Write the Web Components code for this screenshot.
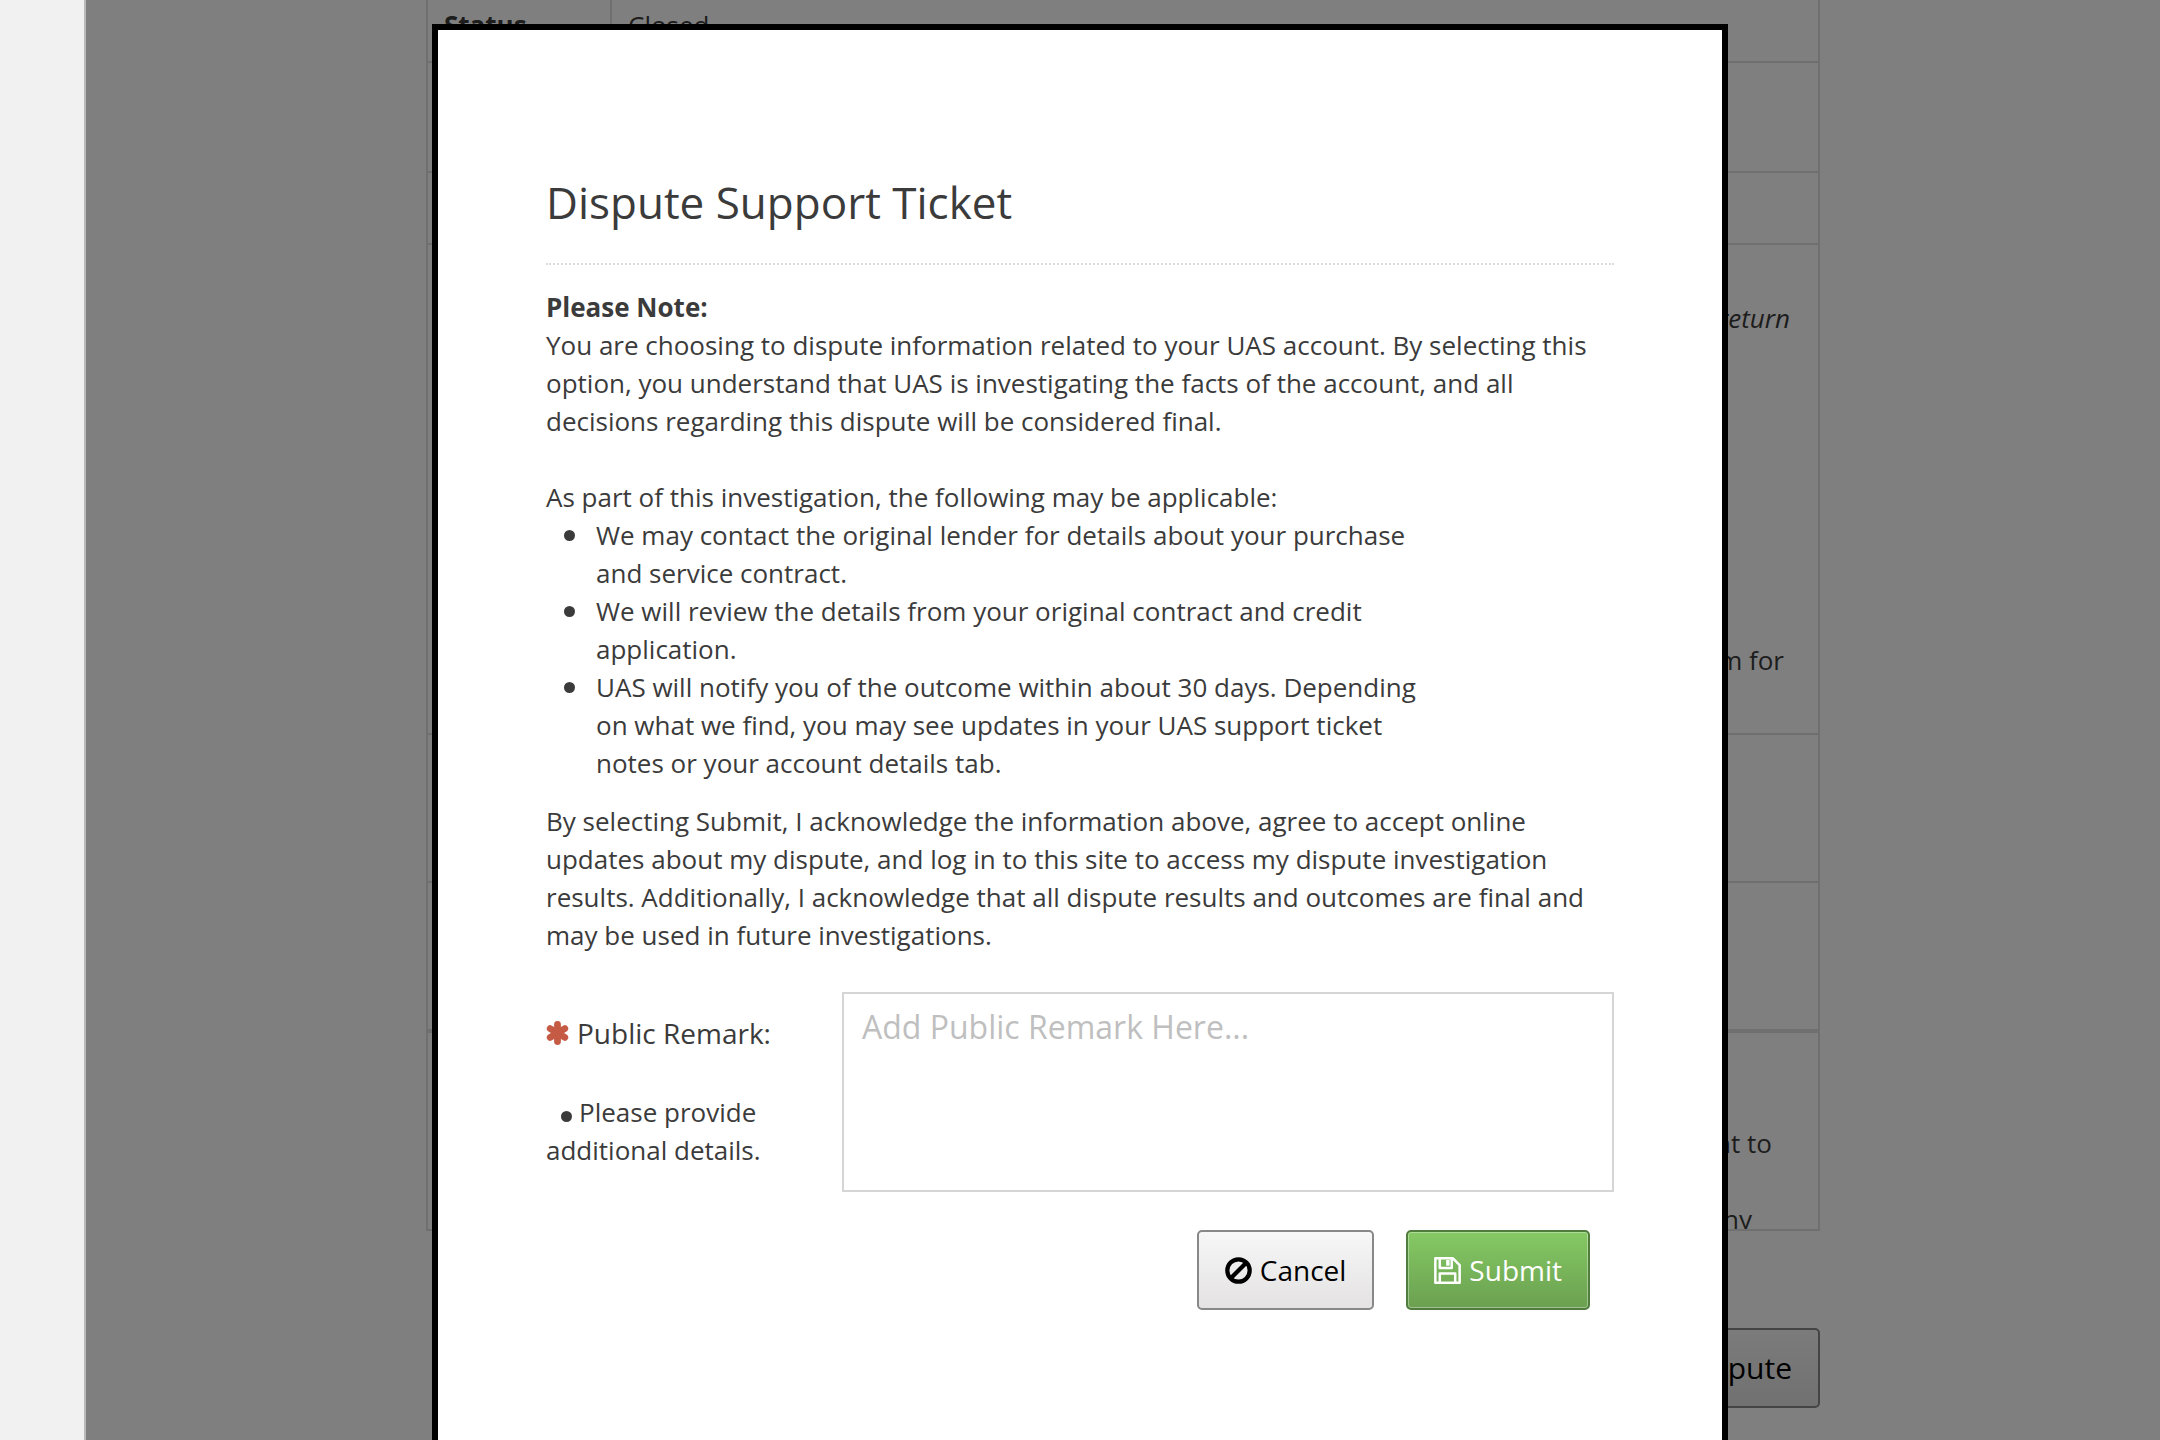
<!DOCTYPE html>
<html lang="en">
<head>
<meta charset="utf-8">
<title>Dispute Support Ticket</title>
<style>
  html, body { height: 100%; }
  body { margin: 0; overflow: hidden; background: #fff; color: #3b3b3b; font: 26px/38px "Open Sans", "Noto Sans", sans-serif; }
</style>
</head>
<body>
<app-shell>
  <ticket-details></ticket-details>
  <support-dialog slot="dialog" heading="Dispute Support Ticket">
    <dispute-notice></dispute-notice>
    <remark-form></remark-form>
  </support-dialog>
</app-shell>

<script>
class BaseElement extends HTMLElement {
  connectedCallback() {
    if (!this.shadowRoot) this.attachShadow({ mode: 'open' }).innerHTML = this.view();
  }
}

customElements.define('app-shell', class extends BaseElement {
  view() { return `
    <style>
      :host { display: flex; height: 100vh; overflow: hidden; }
      aside { box-sizing: border-box; flex: none; width: 86px; background: #f1f1f1; border-right: 2px solid #bababa; }
      main { position: relative; flex: 1; min-width: 0; padding: 0 340px; overflow: hidden; }
      .backdrop { position: absolute; inset: 0; background: rgba(0, 0, 0, .5); }
    </style>
    <aside></aside>
    <main><slot></slot><div class="backdrop"></div></main>
    <slot name="dialog"></slot>`; }
});

customElements.define('ticket-details', class extends BaseElement {
  view() { return `
    <style>
      :host { display: block; }
      table { width: 100%; border-collapse: collapse; border-top: 0; table-layout: fixed; }
      th, td { box-sizing: border-box; border: 2px solid #dfdfdf; padding: 6px 16px; vertical-align: top; text-align: left; }
      tr:first-child > * { border-top: 0; }
      th { width: 184px; font-weight: 700; }
      p { margin: 0; text-align: right; }
      .italic { font-style: italic; padding: 48px 12px 0 0; }
      .form { padding: 304px 18px 0 0; }
      .notes { box-sizing: border-box; height: 200px; border: 2px solid #dfdfdf; padding: 91px 46px 0 0; overflow: hidden; }
      .notes p + p { padding: 38px 20px 0 0; }
      .actions { display: flex; justify-content: flex-end; padding-top: 97px; }
      .actions ui-button { --button-size: 30px; }
    </style>
    <table>
      <tr style="height:62px"><th scope="row">Status</th><td>Closed</td></tr>
      <tr style="height:110px"><th></th><td></td></tr>
      <tr style="height:72px"><th></th><td></td></tr>
      <tr style="height:490px"><th></th><td><p class="italic">return</p><p class="form">form for</p></td></tr>
      <tr style="height:148px"><th></th><td></td></tr>
      <tr style="height:148px"><th></th><td></td></tr>
    </table>
    <div class="notes"><p>want to</p><p>any</p></div>
    <div class="actions"><ui-button>Dispute</ui-button></div>`; }
});

customElements.define('ui-button', class extends BaseElement {
  view() { return `
    <style>
      :host { display: block; }
      button { display: flex; align-items: center; gap: 8px; box-sizing: border-box; height: 80px; margin: 0; padding: 0 26px;
        border: 2px solid #888; border-radius: 5px; background: linear-gradient(#f7f7f7, #e4e2e3); color: #000;
        font-family: "Open Sans", "Noto Sans", sans-serif; font-size: var(--button-size, 28px); line-height: 40px; }
      :host([variant="primary"]) button { color: #fff; border-color: #507d3d; background: linear-gradient(#85c964, #6ba050);
        box-shadow: inset 0 0 0 1px rgba(255, 255, 255, .35); }
      ::slotted(svg) { display: block; width: 27px; height: 27px; }
    </style>
    <button type="button"><slot name="icon"></slot><span><slot></slot></span></button>`; }
});

customElements.define('support-dialog', class extends BaseElement {
  view() { return `
    <style>
      :host { position: fixed; inset: 0; display: grid; padding: 24px 20% 0; overflow: hidden; }
      section { box-sizing: border-box; border: 6px solid #000; border-bottom: 0; background: #fff; padding: 142px 108px 0; }
      h1 { margin: 0 0 23px; padding-bottom: 31px; border-bottom: 2px dotted #dcdcdc; font-size: 44px; line-height: 60px; font-weight: 400; }
    </style>
    <section role="dialog" aria-labelledby="title">
      <h1 id="title">${this.getAttribute('heading')}</h1>
      <slot></slot>
    </section>`; }
});

customElements.define('dispute-notice', class extends BaseElement {
  view() { return `
    <style>
      :host { display: block; }
      p { margin: 0; }
      .gap { margin-top: 38px; }
      ul { margin: 0 180px 20px 0; padding: 0; list-style: none; }
      li { display: grid; grid-template-columns: 50px 1fr; }
      li::before { content: ""; width: 11px; height: 11px; margin: 14px 0 0 18px; border-radius: 50%; background: #3b3b3b; }
    </style>
    <p><strong>Please Note:</strong></p>
    <p>You are choosing to dispute information related to your UAS account. By selecting this option, you understand that UAS is investigating the facts of the account, and all decisions regarding this dispute will be considered final.</p>
    <p class="gap">As part of this investigation, the following may be applicable:</p>
    <ul>
      <li>We may contact the original lender for details about your purchase and service contract.</li>
      <li>We will review the details from your original contract and credit application.</li>
      <li>UAS will notify you of the outcome within about 30 days. Depending on what we find, you may see updates in your UAS support ticket notes or your account details tab.</li>
    </ul>
    <p>By selecting Submit, I acknowledge the information above, agree to accept online updates about my dispute, and log in to this site to access my dispute investigation results. Additionally, I acknowledge that all dispute results and outcomes are final and may be used in future investigations.</p>`; }
});

customElements.define('remark-form', class extends BaseElement {
  view() { return `
    <style>
      :host { display: block; margin-top: 38px; }
      .field { display: grid; grid-template-columns: 296px 1fr; }
      .caption { padding: 21px 60px 0 0; }
      label { display: flex; align-items: center; gap: 8px; font-size: 28px; line-height: 40px; }
      label svg { flex: none; width: 23px; height: 24px; }
      .caption p { margin: 40px 0 0; }
      .dot { display: inline-block; width: 11px; height: 11px; margin: 0 7px 0 15px; border-radius: 50%; background: #3b3b3b; vertical-align: baseline; }
      textarea { box-sizing: border-box; display: block; width: 100%; height: 200px; margin: 0; padding: 11px 18px; resize: none;
        border: 2px solid #d5d5d5; border-radius: 0; background: #fff; color: #3b3b3b; font: 32px/44px "Open Sans", "Noto Sans", sans-serif; }
      textarea::placeholder { color: #bfbfbf; opacity: 1; }
      .actions { display: flex; justify-content: flex-end; gap: 32px; padding: 38px 24px 0 0; }
    </style>
    <form>
      <div class="field">
        <div class="caption">
          <label for="remark">
            <svg viewBox="0 0 23 24" aria-hidden="true"><g stroke="#c55b45" stroke-width="6.8" stroke-linecap="round"><path d="M11.5 3.4v17.2M4.2 7.6l14.6 8.8M18.8 7.6L4.2 16.4"/></g></svg>
            <span>Public Remark:</span>
          </label>
          <p><span class="dot"></span>Please provide additional details.</p>
        </div>
        <textarea id="remark" placeholder="Add Public Remark Here..."></textarea>
      </div>
      <div class="actions">
        <ui-button>
          <svg slot="icon" viewBox="0 0 28 28" aria-hidden="true"><g fill="none" stroke="#000" stroke-width="4.4"><circle cx="14" cy="14" r="11.6"/><path d="M22 6L6 22"/></g></svg>Cancel</ui-button>
        <ui-button variant="primary">
          <svg slot="icon" viewBox="0 0 28 28" aria-hidden="true"><g fill="none" stroke="#fff" stroke-width="2.6" stroke-linejoin="round"><path d="M1.4 1.4h18.2l7 7v18.2H1.4z"/><path d="M6 2v9.4h12.4V2M6 26v-8.8h16V26"/></g><path d="M12.6 3h3.6v6h-3.6z" fill="#fff"/></svg>Submit</ui-button>
      </div>
    </form>`; }
});
</script>
</body>
</html>
